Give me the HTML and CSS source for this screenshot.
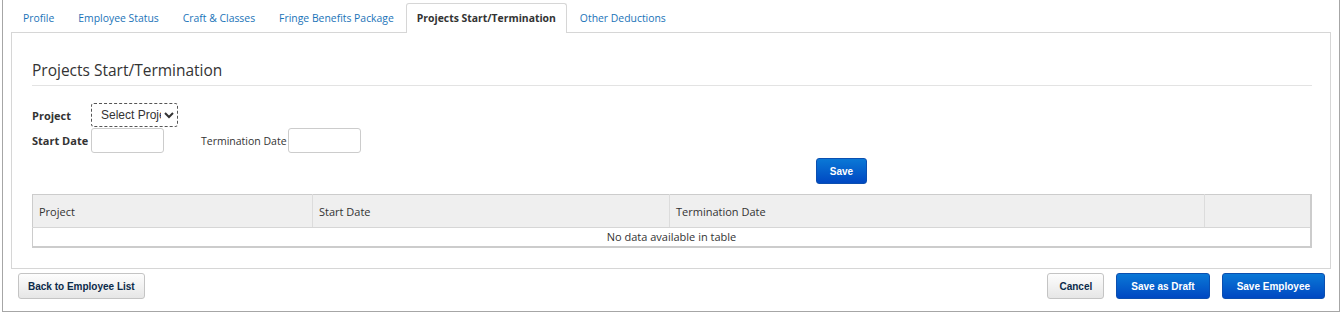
FILE: index.html
```html
<!DOCTYPE html>
<html lang="en">
<head>
  <meta charset="UTF-8" />
  <title>Employee - Projects Start/Termination</title>
  <link rel="stylesheet" href="styles.css">
</head>
<body>

  <div class="page">
    <ul class="tabs">
      <li><a href="#">Profile</a></li>
      <li><a href="#">Employee Status</a></li>
      <li><a href="#">Craft &amp; Classes</a></li>
      <li><a href="#">Fringe Benefits Package</a></li>
      <li class="active"><a href="#">Projects Start/Termination</a></li>
      <li><a href="#">Other Deductions</a></li>
    </ul>

    <div class="tab-panel">
      <h3 class="section-title">Projects Start/Termination</h3>

      <div class="form-row">
        <label class="lbl">Project</label>
        <select class="select-project">
          <option>Select Project</option>
        </select>
      </div>
      <div class="form-row">
        <label class="lbl">Start Date</label>
        <input type="text" class="date-input">
        <label class="lbl-plain">Termination Date</label>
        <input type="text" class="date-input">
      </div>

      <div class="save-row">
        <button class="btn btn-blue btn-small">Save</button>
      </div>

      <table class="grid">
        <thead>
          <tr>
            <th class="col-project">Project</th>
            <th class="col-start">Start Date</th>
            <th class="col-term">Termination Date</th>
            <th></th>
          </tr>
        </thead>
        <tbody>
          <tr>
            <td colspan="4" class="empty">No data available in table</td>
          </tr>
        </tbody>
      </table>
    </div>

    <div class="footer-bar">
      <button class="btn btn-gray btn-back">Back to Employee List</button>
      <div class="footer-right">
        <button class="btn btn-gray">Cancel</button>
        <button class="btn btn-blue">Save as Draft</button>
        <button class="btn btn-blue">Save Employee</button>
      </div>
    </div>
  </div>

</body>
</html>
```

FILE: styles.css
```css
* {
  margin: 0;
  padding: 0;
  box-sizing: border-box;
}

body {
  font-family: 'Open Sans', sans-serif;
  font-size: 12px;
  color: #333;
  background: #fff;
}

.page {
  margin-left: 2px;
  width: 1338px;
  height: 312px;
  border: 1px solid #a6a6a6;
  border-top: none;
  padding: 3px 8px 0 8px;
}

/* tabs */
.tabs {
  list-style: none;
  display: flex;
  height: 30px;
  position: relative;
  z-index: 1;
}

.tabs li {
  margin-right: 1px;
}

.tabs a {
  display: block;
  height: 30px;
  line-height: 28px;
  padding: 0 10px 0 11px;
  font-size: 10.4px;
  color: #1a73b8;
  text-decoration: none;
  border: 1px solid transparent;
  border-bottom: none;
}

.tabs li.active a {
  color: #333;
  font-weight: 700;
  font-size: 10.4px;
  background: #fff;
  border-color: #d6d6d6;
  border-radius: 3px 3px 0 0;
  padding: 0 10px 0 10px;
}

.tab-panel {
  border: 1px solid #d6d6d6;
  margin-top: -1px;
  height: 237px;
  padding: 0 18px 0 20px;
}

.section-title {
  font-size: 15.5px;
  font-weight: 400;
  color: #333;
  margin-top: 26px;
  padding-bottom: 4px;
  border-bottom: 1px solid #e3e3e3;
  margin-bottom: 17px;
}

.form-row {
  display: flex;
  align-items: center;
  margin-bottom: 1px;
}

.lbl {
  width: 59px;
  font-size: 11px;
  font-weight: 700;
}

.lbl-plain {
  font-size: 10.5px;
  margin-left: 37px;
  margin-right: 1px;
}

.select-project {
  width: 87px;
  height: 24px;
  font-family: 'Liberation Sans', sans-serif;
  font-size: 12px;
  color: #333;
  padding-left: 5px;
  border: 1px dashed #555;
  border-radius: 3px;
  background: #fff;
}

.date-input {
  width: 73px;
  height: 25px;
  border: 1px solid #ccc;
  border-radius: 3px;
}

.save-row {
  display: flex;
  padding-left: 784px;
  margin-top: 5px;
  margin-bottom: 10px;
}

/* buttons */
.btn {
  font-family: 'Liberation Sans', sans-serif;
  font-size: 10px;
  font-weight: 700;
  height: 26px;
  padding: 0 14px;
  border-radius: 3px;
  cursor: pointer;
}

.btn-small {
  width: 51px;
  padding: 0;
}

.btn-back {
  padding: 0 9px;
}

.btn-blue {
  color: #fff;
  border: 1px solid #0b4fb0;
  background: linear-gradient(#0a78d6, #0048c2);
}

.btn-gray {
  color: #0b2a4a;
  border: 1px solid #c4c4c4;
  background: linear-gradient(#fdfdfd, #e6e6e6);
}

.footer-right .btn-gray {
  padding: 0 11px;
}

/* table */
.grid {
  width: 1280px;
  border-collapse: collapse;
  border: 1px solid #ccc;
  border-right: 2px solid #ccc;
  border-bottom: 2px solid #ccc;
  font-size: 11px;
}

.grid th {
  background: #efefef;
  text-align: left;
  font-weight: 400;
  height: 33px;
  padding-left: 6px;
  border-right: 1px solid #dcdcdc;
  border-bottom: 1px solid #d6d6d6;
}

.col-project { width: 280px; }
.col-start { width: 357px; }
.col-term { width: 535px; }

.grid td.empty {
  text-align: center;
  height: 19px;
  color: #333;
}

/* footer */
.footer-bar {
  display: flex;
  justify-content: space-between;
  padding: 4px 6px 0 7px;
}

.footer-right {
  display: flex;
  gap: 12px;
}
```
